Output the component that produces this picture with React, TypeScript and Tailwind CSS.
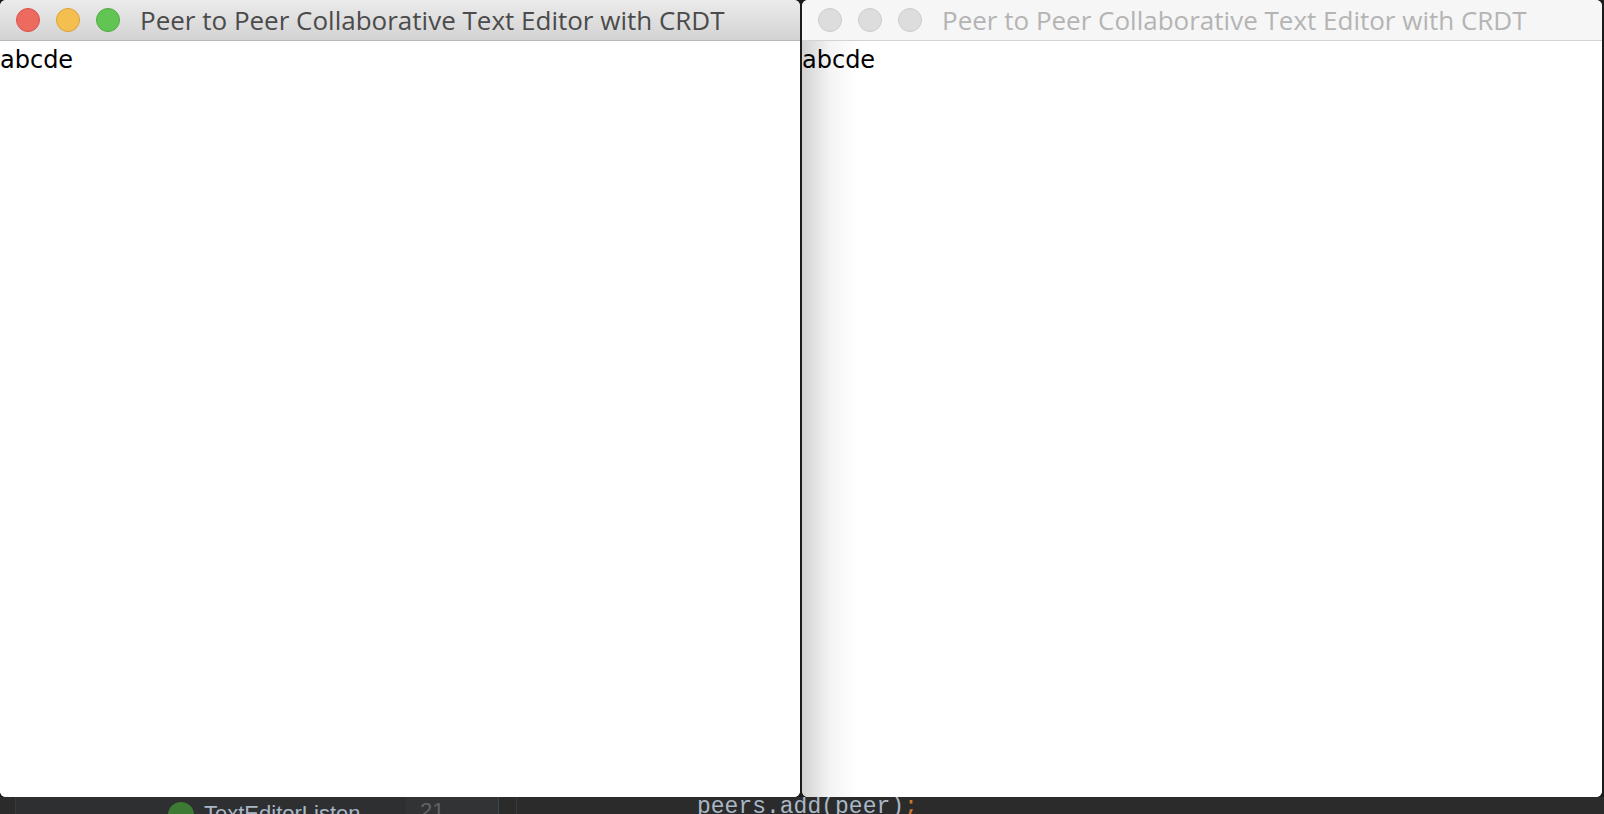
const TITLE = "Peer to Peer Collaborative Text Editor with CRDT";

function TrafficLights({ active }: { active: boolean }) {
  if (!active) {
    return (
      <div className="flex items-center gap-[16px] pl-[16px]">
        <span className="h-[24px] w-[24px] rounded-full border border-[#cdcdcd] bg-[#dddddd]" />
        <span className="h-[24px] w-[24px] rounded-full border border-[#cdcdcd] bg-[#dddddd]" />
        <span className="h-[24px] w-[24px] rounded-full border border-[#cdcdcd] bg-[#dddddd]" />
      </div>
    );
  }
  return (
    <div className="flex items-center gap-[16px] pl-[16px]">
      <span className="h-[24px] w-[24px] rounded-full border border-[#d9534a] bg-[#ed6a5e]" />
      <span className="h-[24px] w-[24px] rounded-full border border-[#dba23a] bg-[#f5bf4f]" />
      <span className="h-[24px] w-[24px] rounded-full border border-[#52a842] bg-[#61c554]" />
    </div>
  );
}

function EditorWindow({ active }: { active: boolean }) {
  return (
    <div className="flex h-full w-[800px] flex-col overflow-hidden rounded-[6px] bg-white">
      <div
        className={
          active
            ? "flex h-[41px] shrink-0 items-center border-b border-[#b9b9b9] bg-[linear-gradient(to_bottom,#ebebeb,#d3d3d3)]"
            : "flex h-[41px] shrink-0 items-center border-b border-[#d3d3d3] bg-[#f6f6f6]"
        }
      >
        <TrafficLights active={active} />
        <span
          className={
            "ml-[20px] whitespace-nowrap text-[26px] leading-none font-['Open_Sans','Liberation_Sans',sans-serif] " +
            (active ? "text-[#4b4b4b]" : "text-[#b4b4b4]")
          }
        >
          {TITLE}
        </span>
      </div>
      <div
        className={
          active
            ? "flex-1 bg-white"
            : "flex-1 bg-[linear-gradient(to_right,#d2d2d2,#f4f4f4_28px,#ffffff_56px)]"
        }
      >
        <p className="pt-[4px] text-[24px] leading-[30px] text-black font-['DejaVu_Sans',sans-serif]">abcde</p>
      </div>
    </div>
  );
}

export default function App() {
  return (
    <div className="flex h-[814px] w-[1604px] flex-col overflow-hidden bg-[#2b2b2b]">
      <div className="flex h-[797px] shrink-0 gap-[2px] bg-[#1c1c1c]">
        <EditorWindow active />
        <EditorWindow active={false} />
      </div>
      <div className="flex h-[17px] overflow-hidden font-['Liberation_Sans',sans-serif] text-[22px] leading-[28px]">
        <div className="w-[16px] border-r border-[#3a3a3a] bg-[#2b2b2b]" />
        <div className="flex w-[390px] items-start bg-[#2e2f31] pl-[152px]">
          <span className="mt-[5px] h-[26px] w-[26px] shrink-0 rounded-full bg-[#3d7a33]" />
          <span className="ml-[10px] mt-[3px] text-[#a9b7c6]">TextEditorListen</span>
        </div>
        <div className="w-[92px] bg-[#313335] pl-[14px]">
          <span className="text-[#606366]">21</span>
        </div>
        <div className="w-[1px] bg-[#2f4f4f]" />
        <div className="w-[18px] border-r border-[#3a3a3a] bg-[#2b2b2b]" />
        <div className="flex-1 bg-[#2b2b2b] pl-[180px]">
          <span className="mt-[-4px] block font-['Liberation_Mono',monospace] text-[23px] text-[#a9b7c6]">
            peers.add(peer)<span className="text-[#cc7832]">;</span>
          </span>
        </div>
      </div>
    </div>
  );
}
